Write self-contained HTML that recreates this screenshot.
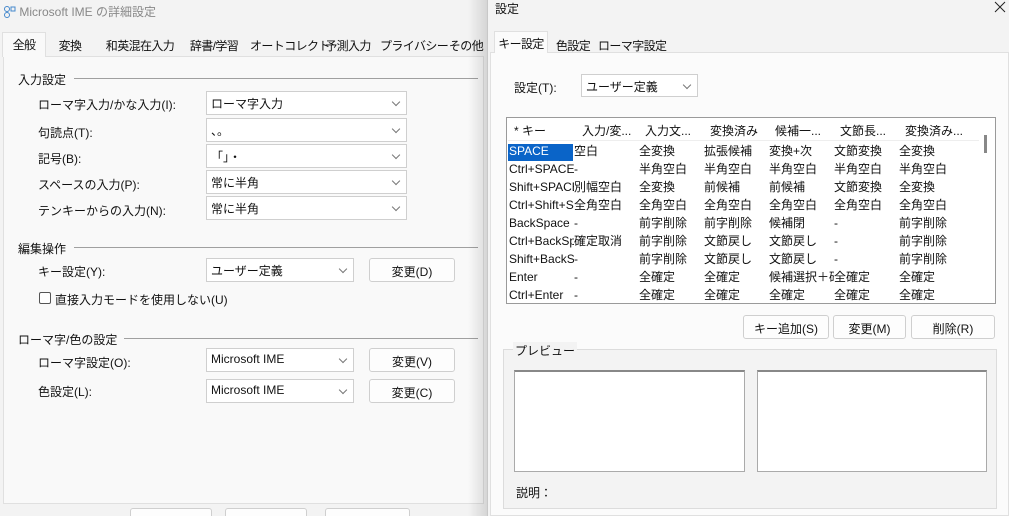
<!DOCTYPE html>
<html><head><meta charset="utf-8"><style>
*{margin:0;padding:0;box-sizing:border-box}
html,body{width:1009px;height:516px;overflow:hidden}
body{background:#f0f0f0;font-family:"Liberation Sans","Noto Sans CJK JP",sans-serif;font-size:12px;color:#111;position:relative}
.a{position:absolute;white-space:nowrap}
.dd{position:absolute;background:#fff;border:1px solid #cfcfcf;height:24px;padding:3px 0 0 4px;white-space:nowrap}
.dd::after{content:"";position:absolute;right:7px;top:7px;width:5px;height:5px;border-right:1px solid #777;border-bottom:1px solid #777;transform:rotate(45deg)}
.bt{position:absolute;background:#fdfdfd;border:1px solid #cfcfcf;border-radius:3px;height:24px;text-align:center;padding-top:4px;white-space:nowrap}
.ln{position:absolute;height:1px;background:#a0a0a0}
.tab{position:absolute;top:34px;height:22px;padding-top:3px;text-align:center;white-space:nowrap;letter-spacing:-0.6px}
</style></head><body>
<!-- left window -->
<div class="a" style="left:0;top:0;width:487px;height:516px;background:#f3f3f3"></div>
<div class="a" style="left:4px;top:3px;color:#888;font-size:12px">
<svg width="12" height="12" style="vertical-align:-2px"><circle cx="3" cy="3" r="2.5" fill="none" stroke="#48c"/><circle cx="3" cy="9" r="2.5" fill="none" stroke="#48c"/><rect x="7" y="1" width="4" height="4" fill="none" stroke="#48c"/></svg> Microsoft IME の詳細設定</div>
<div class="a" style="left:3px;top:56px;width:481px;height:448px;background:#f9f9f9;border:1px solid #e0e0e0"></div>
<div class="tab" style="left:2px;top:32px;width:44px;height:25px;background:#f9f9f9;border:1px solid #e0e0e0;border-bottom:none">全般</div>
<div class="tab" style="left:50px;width:40px">変換</div>
<div class="tab" style="left:102px;width:76px">和英混在入力</div>
<div class="tab" style="left:186px;width:56px">辞書/学習</div>
<div class="tab" style="left:250px;width:66px">オートコレクト</div>
<div class="tab" style="left:322px;width:52px">予測入力</div>
<div class="tab" style="left:380px;width:62px">プライバシー</div>
<div class="tab" style="left:448px;width:36px">その他</div>

<div class="a" style="left:18px;top:71px">入力設定</div><div class="ln" style="left:74px;top:78px;width:404px"></div>
<div class="a" style="left:38px;top:96px">ローマ字入力/かな入力(I):</div><div class="dd" style="left:206px;top:91px;width:201px">ローマ字入力</div>
<div class="a" style="left:38px;top:124px">句読点(T):</div><div class="dd" style="left:206px;top:118px;width:201px">、。</div>
<div class="a" style="left:38px;top:150px">記号(B):</div><div class="dd" style="left:206px;top:144px;width:201px">「」・</div>
<div class="a" style="left:38px;top:176px">スペースの入力(P):</div><div class="dd" style="left:206px;top:170px;width:201px">常に半角</div>
<div class="a" style="left:38px;top:202px">テンキーからの入力(N):</div><div class="dd" style="left:206px;top:196px;width:201px">常に半角</div>

<div class="a" style="left:18px;top:240px">編集操作</div><div class="ln" style="left:74px;top:247px;width:404px"></div>
<div class="a" style="left:38px;top:263px">キー設定(Y):</div><div class="dd" style="left:206px;top:258px;width:148px">ユーザー定義</div>
<div class="bt" style="left:369px;top:258px;width:86px">変更(D)</div>
<div class="a" style="left:39px;top:292px;width:12px;height:12px;border:1px solid #555;border-radius:2px;background:#fff"></div>
<div class="a" style="left:55px;top:291px">直接入力モードを使用しない(U)</div>

<div class="a" style="left:18px;top:331px">ローマ字/色の設定</div><div class="ln" style="left:124px;top:338px;width:354px"></div>
<div class="a" style="left:38px;top:354px">ローマ字設定(O):</div><div class="dd" style="left:206px;top:348px;width:148px">Microsoft IME</div>
<div class="bt" style="left:369px;top:348px;width:86px">変更(V)</div>
<div class="a" style="left:38px;top:383px">色設定(L):</div><div class="dd" style="left:206px;top:379px;width:148px">Microsoft IME</div>
<div class="bt" style="left:369px;top:379px;width:86px">変更(C)</div>
<div class="bt" style="left:130px;top:508px;width:82px"></div>
<div class="bt" style="left:225px;top:508px;width:82px"></div>
<div class="bt" style="left:325px;top:508px;width:85px"></div>
<div class="a" style="left:468px;top:0;width:19px;height:516px;background:linear-gradient(to right,rgba(0,0,0,0),rgba(0,0,0,.12))"></div>

<!-- right window -->
<div class="a" style="left:487px;top:0;width:522px;height:516px;background:#f3f3f3;border-left:1px solid #c8c8c8"></div>
<div class="a" style="left:495px;top:0px">設定</div>
<svg class="a" style="left:994px;top:1px" width="12" height="12"><path d="M1 1L11 11M11 1L1 11" stroke="#222" stroke-width="1"/></svg>
<div class="a" style="left:490px;top:52px;width:519px;height:464px;background:#fbfbfb;border:1px solid #e0e0e0"></div>
<div class="tab" style="left:494px;top:31px;width:54px;height:22px;background:#fbfbfb;border:1px solid #e0e0e0;border-bottom:none">キー設定</div>
<div class="tab" style="left:551px;width:44px">色設定</div>
<div class="tab" style="left:598px;width:68px">ローマ字設定</div>
<div class="a" style="left:514px;top:79px">設定(T):</div>
<div class="dd" style="left:581px;top:74px;width:117px;height:23px">ユーザー定義</div>

<div class="a" style="left:506px;top:117px;width:490px;height:187px;background:#fff;border:1px solid #9a9a9a"></div>
<div class="a" style="left:984px;top:135px;width:3px;height:18px;background:#888"></div>
<div class="a" style="left:508px;top:119px;width:471px;height:22px;border-bottom:1px solid #eee"></div>
<div class="a" style="left:508px;top:144px;width:65px;height:17px;background:#0a64c8"></div>
<div class="a" style="left:509px;top:122px;line-height:18px;font-size:12px">
<div style="display:flex"><span style="width:65px;padding-left:5px">* キー</span><span style="width:65px;padding-left:8px">入力/変...</span><span style="width:65px;padding-left:6px">入力文...</span><span style="width:65px;padding-left:6px">変換済み</span><span style="width:65px;padding-left:6px">候補一...</span><span style="width:65px;padding-left:6px">文節長...</span><span style="width:65px;padding-left:6px">変換済み...</span></div>
</div>
<div class="a" style="left:509px;top:142px;line-height:18px;font-size:12px">
<style>.r{display:flex}.r span{width:65px;overflow:hidden;white-space:nowrap;padding-right:2px}</style>
<div class="r"><span style="color:#fff">SPACE</span><span>空白</span><span>全変換</span><span>拡張候補</span><span>変換+次</span><span>文節変換</span><span>全変換</span></div>
<div class="r"><span>Ctrl+SPACE</span><span>-</span><span>半角空白</span><span>半角空白</span><span>半角空白</span><span>半角空白</span><span>半角空白</span></div>
<div class="r"><span>Shift+SPACE</span><span>別幅空白</span><span>全変換</span><span>前候補</span><span>前候補</span><span>文節変換</span><span>全変換</span></div>
<div class="r"><span>Ctrl+Shift+S</span><span>全角空白</span><span>全角空白</span><span>全角空白</span><span>全角空白</span><span>全角空白</span><span>全角空白</span></div>
<div class="r"><span>BackSpace</span><span>-</span><span>前字削除</span><span>前字削除</span><span>候補閉</span><span>-</span><span>前字削除</span></div>
<div class="r"><span>Ctrl+BackSp</span><span>確定取消</span><span>前字削除</span><span>文節戻し</span><span>文節戻し</span><span>-</span><span>前字削除</span></div>
<div class="r"><span>Shift+BackS</span><span>-</span><span>前字削除</span><span>文節戻し</span><span>文節戻し</span><span>-</span><span>前字削除</span></div>
<div class="r"><span>Enter</span><span>-</span><span>全確定</span><span>全確定</span><span>候補選択＋確</span><span>全確定</span><span>全確定</span></div>
<div class="r"><span>Ctrl+Enter</span><span>-</span><span>全確定</span><span>全確定</span><span>全確定</span><span>全確定</span><span>全確定</span></div>
</div>

<div class="bt" style="left:743px;top:315px;width:86px">キー追加(S)</div>
<div class="bt" style="left:833px;top:315px;width:73px">変更(M)</div>
<div class="bt" style="left:911px;top:315px;width:84px">削除(R)</div>
<div class="a" style="left:503px;top:349px;width:494px;height:160px;border:1px solid #dcdcdc;background:#f3f3f3"></div>
<div class="a" style="left:513px;top:342px;background:#f3f3f3;padding:0 2px">プレビュー</div>
<div class="a" style="left:514px;top:370px;width:231px;height:102px;background:#fff;border:1px solid #aaa;border-top:2px solid #888"></div>
<div class="a" style="left:757px;top:370px;width:230px;height:102px;background:#fff;border:1px solid #aaa;border-top:2px solid #888"></div>
<div class="a" style="left:516px;top:484px">説明：</div>
</body></html>
